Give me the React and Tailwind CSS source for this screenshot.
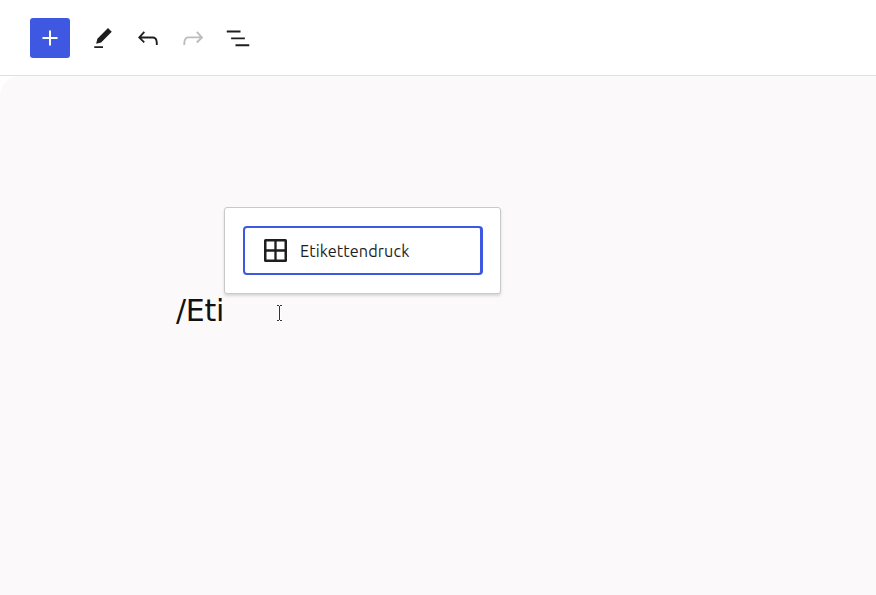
function Icon({ d, className = "" }) {
  return (
    <svg viewBox="0 0 24 24" className={`h-[30px] w-[30px] shrink-0 fill-current ${className}`} aria-hidden="true">
      <path d={d} />
    </svg>
  );
}

const paths = {
  plus: "M18 11.2h-5.2V6h-1.6v5.2H6v1.6h5.2V18h1.6v-5.2H18z",
  edit: "m19 7-3-3-8.5 8.5-1 4 4-1L19 7Zm-7 11.5H5V20h7v-1.5Z",
  undo: "M18.3 11.7c-.6-.6-1.4-.9-2.3-.9H6.7l2.9-3.3-1.1-1-4.5 5L8.5 16l1-1-2.7-2.7H16c.5 0 .9.2 1.3.5 1 1 1 3.4 1 4.5v.3h1.5v-.2c0-1.5 0-4.3-1.5-5.7z",
  redo: "M15.6 6.5l-1.1 1 2.9 3.3H8c-.9 0-1.7.3-2.3.9-1.4 1.5-1.4 4.2-1.4 5.6v.2h1.5v-.3c0-1.1 0-3.5 1-4.5.3-.3.7-.5 1.3-.5h9.2L14.5 15l1.1 1.1 4.6-4.6-4.6-5z",
  list: "M3 6h11v1.5H3V6Zm3.5 5.5h11V13h-11v-1.5ZM21 17H10v1.5h11V17Z",
};

function Toolbar() {
  return (
    <header className="flex h-[76px] items-center border-b border-[#e0e0e0] bg-white pl-[30px] text-[#1e1e1e]">
      <button className="flex size-10 items-center justify-center rounded-[3px] bg-[#3e58e1] text-white" aria-label="+">
        <Icon d={paths.plus} />
      </button>
      <div className="ml-[18px] flex gap-[15px]">
        <Icon d={paths.edit} />
        <Icon d={paths.undo} />
        <Icon d={paths.redo} className="text-[#bdbdbd]" />
        <Icon d={paths.list} />
      </div>
    </header>
  );
}

function BlockMenu() {
  return (
    <div className="absolute top-[131px] left-[224px] h-[87px] w-[277px] rounded-[3px] border border-[#c9c9cb] bg-white p-[18px] shadow-[0_2px_3px_rgba(0,0,0,0.14)]">
      <button className="flex h-[49px] w-[240px] items-center rounded-[4px] border-2 border-r-3 border-[#3e58e1] pl-[19px] text-[#1e1e1e]">
        <svg viewBox="0 0 23 23" className="size-[23px] shrink-0" fill="none" stroke="#1e1e1e" aria-hidden="true">
          <rect x="1.25" y="1.25" width="20.5" height="20.5" rx="0.3" strokeWidth="2.5" />
          <path d="M11.5 1v21M1 11.5h21" strokeWidth="2.3" />
        </svg>
        <span className="ml-[13px] font-['Ubuntu','Noto_Sans',sans-serif] text-[16.25px] leading-6 tracking-[0.1px]">Etikettendruck</span>
      </button>
    </div>
  );
}

function TextCursor() {
  return (
    <svg viewBox="0 0 10 18" className="absolute top-[228px] left-[275px] h-[18px] w-[10px]" fill="none" aria-hidden="true">
      <path d="M2 1.5h6M4.5 1.5v15M2 16.5h6" stroke="#fff" strokeWidth="3" />
      <path d="M2 1.5h2M5 1.5h2M4.5 2v14M2 16.5h2M5 16.5h2" stroke="#333" strokeWidth="1" />
    </svg>
  );
}

export default function App() {
  return (
    <div className="flex h-[595px] w-[876px] flex-col overflow-hidden bg-white">
      <Toolbar />
      <main className="relative flex-1 rounded-tl-[20px] bg-[#fbf9fa] pt-[212px] pl-[176px]">
        <p className="font-['DejaVu_Sans',sans-serif] text-[30px] leading-[46px] tracking-[-0.3px] text-[#111]">/Eti</p>
        <BlockMenu />
        <TextCursor />
      </main>
    </div>
  );
}
